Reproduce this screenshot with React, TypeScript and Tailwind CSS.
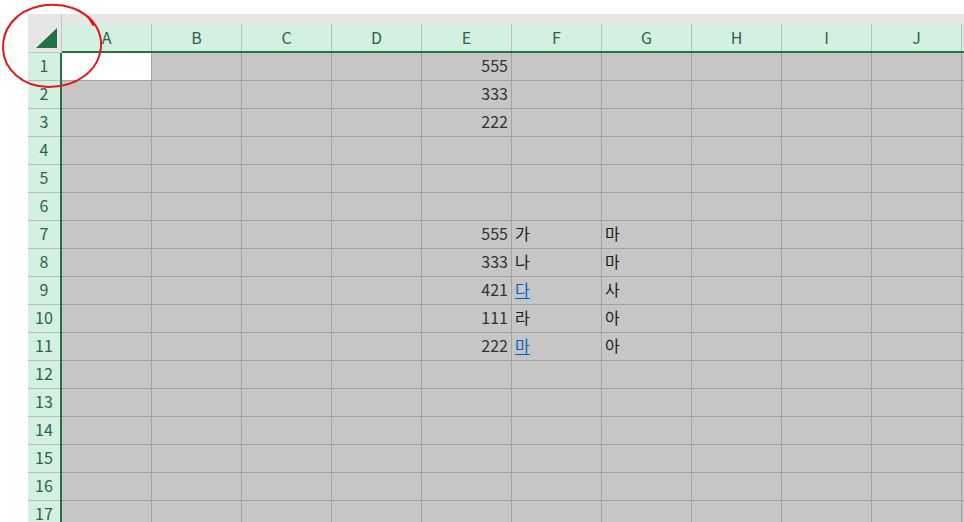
import React from 'react';

const COLUMNS = ['A', 'B', 'C', 'D', 'E', 'F', 'G', 'H', 'I', 'J', 'K'];
const ROW_COUNT = 17;

type Cell = { value: string; align?: 'right'; link?: boolean };

const DATA: Record<string, Cell> = {
  E1: { value: '555', align: 'right' },
  E2: { value: '333', align: 'right' },
  E3: { value: '222', align: 'right' },
  E7: { value: '555', align: 'right' },
  F7: { value: '가' },
  G7: { value: '마' },
  E8: { value: '333', align: 'right' },
  F8: { value: '나' },
  G8: { value: '마' },
  E9: { value: '421', align: 'right' },
  F9: { value: '다', link: true },
  G9: { value: '사' },
  E10: { value: '111', align: 'right' },
  F10: { value: '라' },
  G10: { value: '아' },
  E11: { value: '222', align: 'right' },
  F11: { value: '마', link: true },
  G11: { value: '아' },
};

const font = "font-['Noto_Sans_CJK_KR',_'Noto_Sans',_sans-serif]";

function CornerCell() {
  return (
    <div className="relative h-[39px] w-[34px] shrink-0 border-r border-b border-[#c6c6c6] bg-[#e6e6e6]">
      <svg
        className="absolute right-[4px] bottom-[4px]"
        width="21"
        height="20"
        viewBox="0 0 21 20"
        aria-hidden="true"
      >
        <polygon points="21,0 21,20 0,20" fill="#217346" />
      </svg>
    </div>
  );
}

function ColumnHeaders() {
  return (
    <div className="flex flex-col">
      <div className="h-[10px] bg-[#e6e6e6]" />
      <div className="flex border-b-2 border-[#217346] bg-[#d3f0e0]">
        {COLUMNS.map((col) => (
          <div
            key={col}
            className="flex h-[27px] w-[90px] shrink-0 items-center justify-center border-r border-[#bcbcbc] pb-[2px] text-[16px] text-[#2e6449]"
          >
            {/* the K column only shows its left edge */}
            {col === 'K' ? '' : col}
          </div>
        ))}
      </div>
    </div>
  );
}

function GridCell({ id }: { id: string }) {
  const cell = DATA[id];
  const isActive = id === 'A1';
  return (
    <div
      className={`flex h-[28px] w-[90px] shrink-0 items-center overflow-hidden border-r border-b border-[#a3a3a3] px-[3px] pb-[4px] text-[16px] leading-none ${
        isActive ? 'bg-white' : 'bg-[#c6c6c6]'
      } ${cell?.align === 'right' ? 'justify-end text-[#333333]' : 'justify-start text-[#1a1a1a]'}`}
    >
      {cell &&
        (cell.link ? (
          <span className="text-[#0563c1] underline underline-offset-2">{cell.value}</span>
        ) : (
          <span>{cell.value}</span>
        ))}
    </div>
  );
}

export default function App() {
  const rows = Array.from({ length: ROW_COUNT }, (_, i) => i + 1);

  return (
    <div className={`relative h-[522px] w-[964px] overflow-hidden bg-white pt-[14px] pl-[28px] ${font}`}>
      <div className="flex">
        <CornerCell />
        <ColumnHeaders />
      </div>

      <div className="flex">
        {/* Row headers */}
        <div className="flex w-[34px] shrink-0 flex-col border-r-2 border-[#217346] bg-[#d3f0e0]">
          {rows.map((r) => (
            <div
              key={r}
              className="flex h-[28px] items-center justify-center border-b border-[#bcbcbc] pb-[3px] text-[16px] leading-none text-[#2e6449]"
            >
              {r}
            </div>
          ))}
        </div>

        {/* Cells */}
        <div className="flex flex-col">
          {rows.map((r) => (
            <div key={r} className="flex">
              {COLUMNS.map((c) => (
                <GridCell key={c} id={`${c}${r}`} />
              ))}
            </div>
          ))}
        </div>
      </div>

      {/* Hand-drawn annotation circle */}
      <svg
        className="pointer-events-none absolute top-0 left-0"
        width="110"
        height="95"
        viewBox="0 0 110 95"
        aria-hidden="true"
      >
        <path
          d="M 93 25 C 87 9, 62 2, 40 6 C 15 11, 2 30, 3 49 C 4 69, 22 87, 49 87 C 76 87, 99 71, 101 47 C 102 33, 95 19, 79 11"
          fill="none"
          stroke="#e8141c"
          strokeWidth="2"
          strokeLinecap="round"
        />
      </svg>
    </div>
  );
}
